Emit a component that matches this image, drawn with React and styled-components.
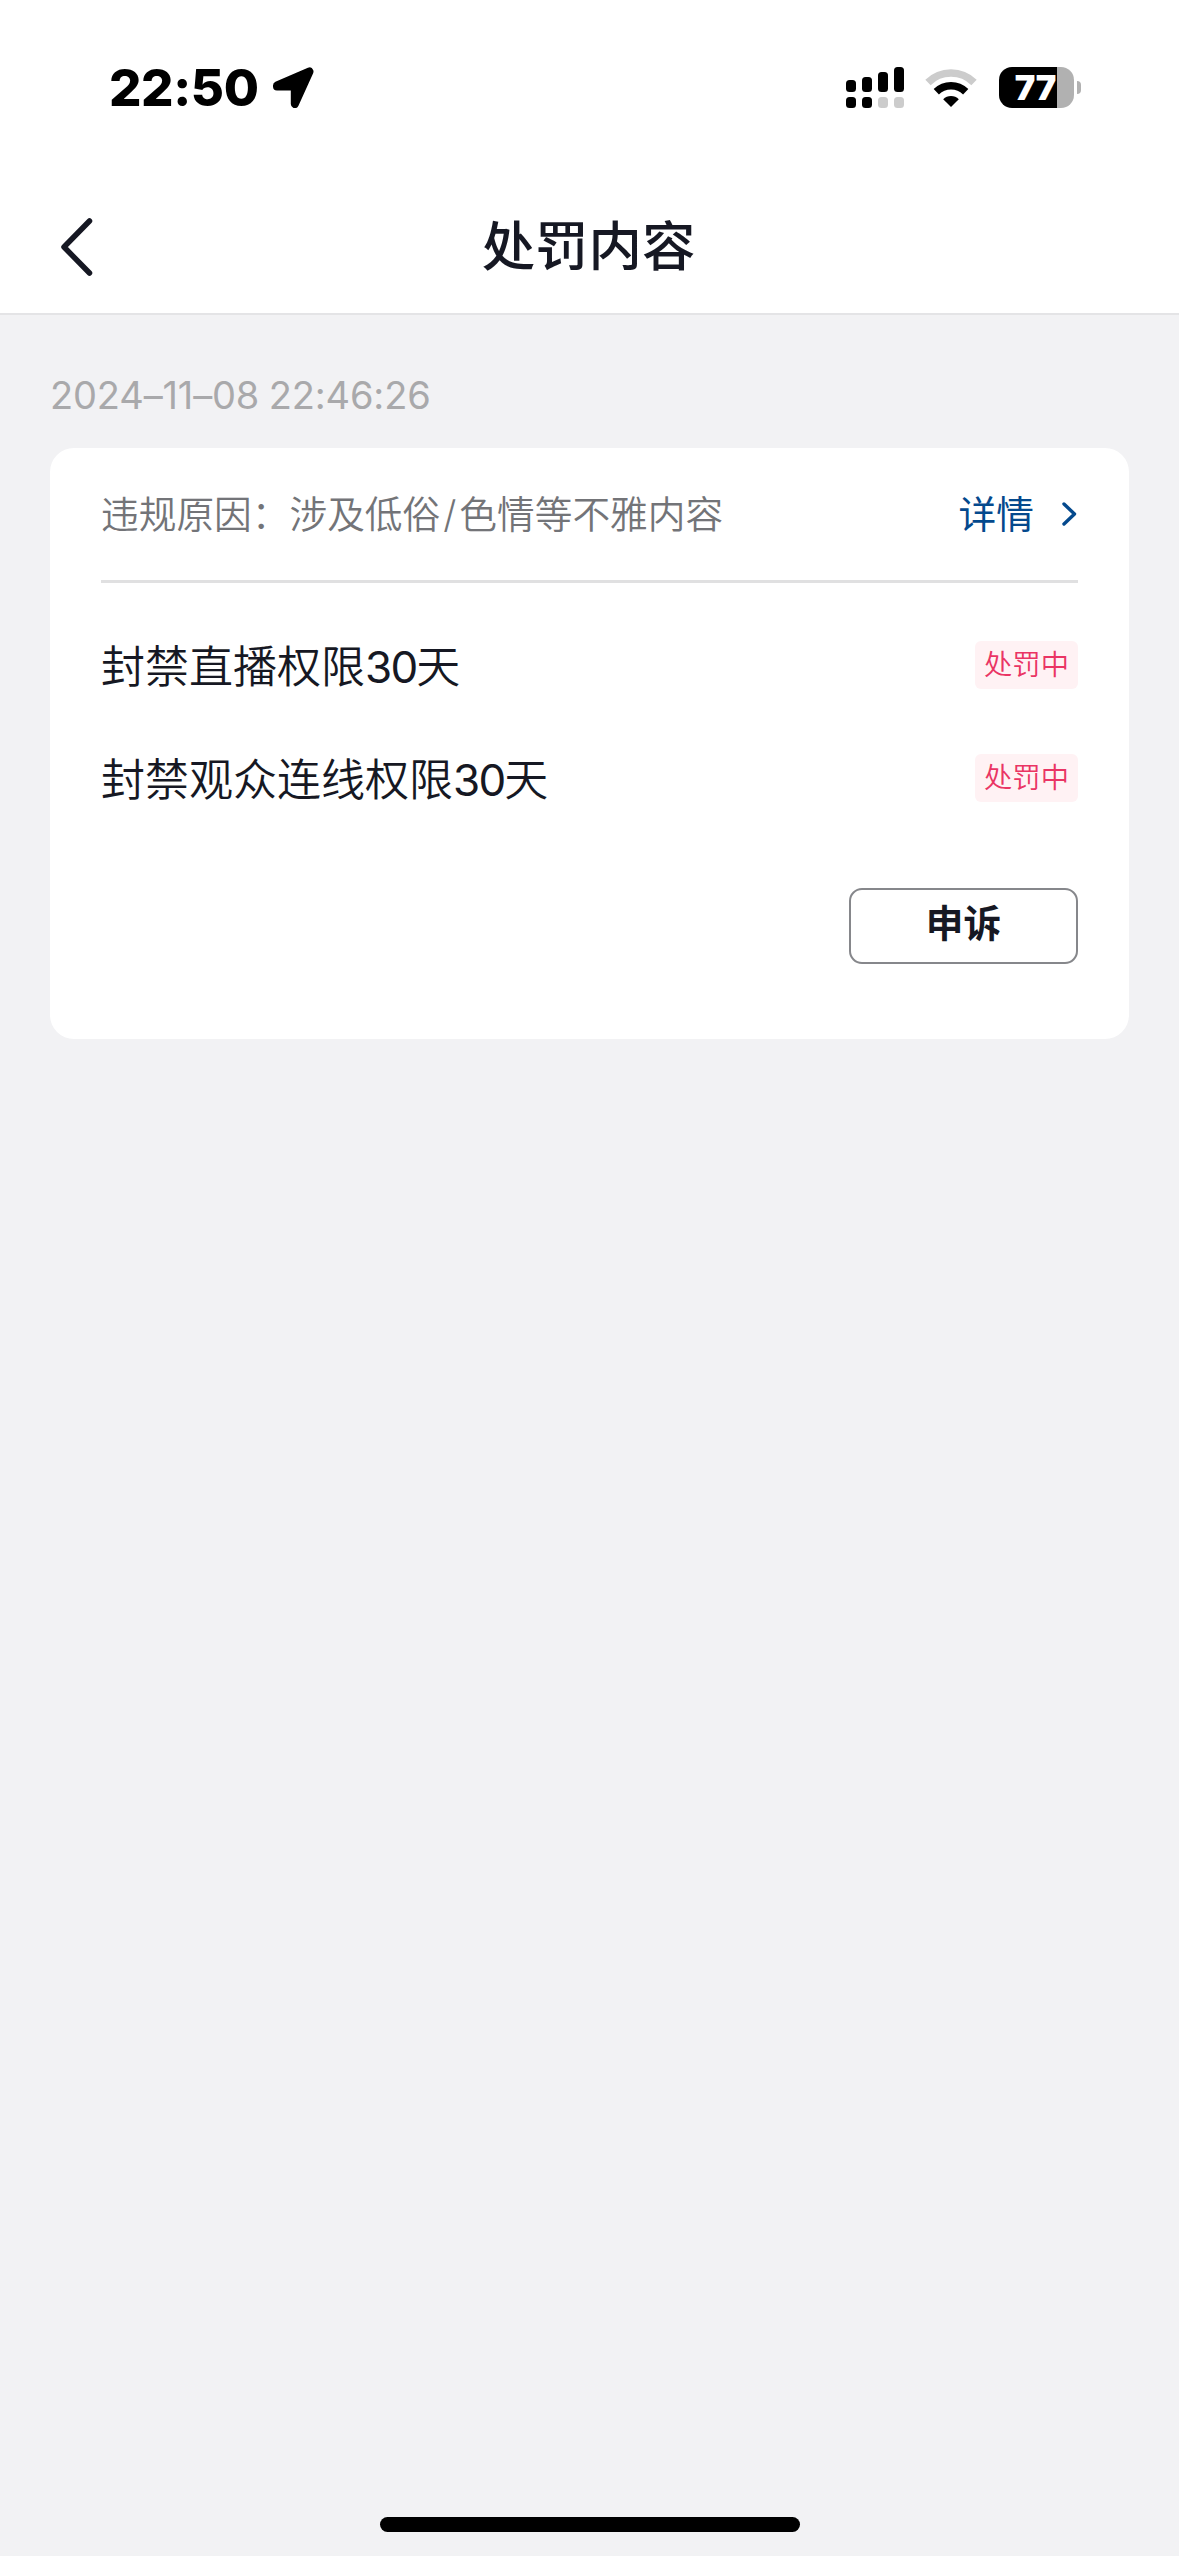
import React from 'react';
import styled, { createGlobalStyle } from 'styled-components';

const GlobalStyle = createGlobalStyle`
  * {
    box-sizing: border-box;
  }
  body {
    margin: 0;
    background: #f2f2f4;
    font-family: Inter, 'Noto Sans CJK SC', sans-serif;
    color: #161823;
  }
`;

const Screen = styled.div`
  display: flex;
  flex-direction: column;
  width: 1179px;
  height: 2556px;
  background: #f2f2f4;
`;

const StatusBar = styled.div`
  display: flex;
  align-items: center;
  justify-content: space-between;
  height: 177px;
  padding: 0 98px 2px 109px;
  background: #fff;
`;

const StatusGroup = styled.div`
  display: flex;
  align-items: center;
`;

const Clock = styled.span`
  width: 164px;
  font-size: 51px;
  font-weight: 800;
  line-height: 60px;
  letter-spacing: -0.4px;
  color: #000;
`;

const NavBar = styled.div`
  display: grid;
  grid-template-columns: 160px 1fr 162px;
  align-items: center;
  height: 138px;
  padding-top: 3px;
  border-bottom: 2px solid #e4e4e6;
  background: #fff;
`;

const BackButton = styled.button`
  display: flex;
  padding: 0 0 0 58px;
  border: 0;
  background: none;
`;

const Title = styled.h1`
  margin: 0;
  font-size: 53.4px;
  font-weight: 500;
  line-height: 74px;
  text-align: center;
`;

const Content = styled.div`
  flex: 1;
  padding: 57px 50px 0;
`;

const Time = styled.div`
  height: 76px;
  font-size: 38px;
  font-weight: 400;
  line-height: 46px;
  letter-spacing: -0.15px;
  word-spacing: -1px;
  color: #a9a9ab;
`;

const Card = styled.div`
  height: 591px;
  padding: 0 51px;
  border-radius: 24px;
  background: #fff;
`;

const Reason = styled.div`
  display: flex;
  align-items: center;
  justify-content: space-between;
  height: 135px;
  border-bottom: 3px solid #e0e0e1;
  font-size: 37.7px;
  font-weight: 350;
  line-height: 54px;
`;

const ReasonText = styled.span`
  color: #737478;
`;

const Slash = styled.span`
  padding: 0 3px;
`;

const DetailLink = styled.a`
  display: flex;
  align-items: center;
  gap: 27px;
  font-weight: 400;
  color: #04498d;
`;

const List = styled.div`
  display: flex;
  flex-direction: column;
  gap: 49px;
  padding-top: 50px;
`;

const Item = styled.div`
  display: flex;
  align-items: center;
  justify-content: space-between;
  height: 64px;
`;

const Label = styled.span`
  padding-top: 4px;
  font-size: 44px;
  font-weight: 350;
  line-height: 64px;
`;

const Days = styled.span`
  font-weight: 400;
  letter-spacing: -1.8px;
`;

const Tag = styled.span`
  width: 103px;
  height: 48px;
  border-radius: 6px;
  background: #fff2f4;
  font-size: 28.3px;
  font-weight: 350;
  line-height: 48px;
  text-align: center;
  color: #ea3564;
`;

const Actions = styled.div`
  display: flex;
  justify-content: flex-end;
  padding-top: 78px;
`;

const AppealButton = styled.button`
  width: 229px;
  height: 76px;
  padding: 0 0 7px;
  border: 2px solid #86878b;
  border-radius: 13px;
  background: #fff;
  font-family: inherit;
  font-size: 37.7px;
  font-weight: 700;
  line-height: 54px;
  color: #161823;
`;

const HomeIndicator = styled.div`
  width: 420px;
  height: 15px;
  margin: 0 auto 24px;
  border-radius: 8px;
  background: #000;
`;

const punishments = [
  { scope: '封禁直播权限', days: 30, status: '处罚中' },
  { scope: '封禁观众连线权限', days: 30, status: '处罚中' },
];

const bars = [
  { x: 0, y: 13 },
  { x: 16, y: 10 },
  { x: 32, y: 5 },
  { x: 48, y: 0 },
];

const LocationIcon = () => (
  <svg width="41" height="41" viewBox="0 0 41 41">
    <path
      d="M4 18.5 36.5 4.5 21.8 37V19.5H4Z"
      stroke="#000"
      strokeWidth="8"
      strokeLinejoin="round"
    />
  </svg>
);

const SignalIcon = () => (
  <svg width="58" height="41" viewBox="0 0 58 41">
    {bars.map(({ x, y }, i) => (
      <g key={x}>
        <rect x={x} y={y} width="10" height={25 - y} rx="3.5" />
        <rect x={x} y="30" width="10" height="11" rx="3.5" fill={i > 1 ? '#ccc' : '#000'} />
      </g>
    ))}
  </svg>
);

const WifiIcon = () => (
  <svg width="52" height="38" viewBox="0 0 52 38" fill="none">
    <path d="M3 13.5A32.5 32.5 0 0 1 49 13.5" stroke="#ccc" strokeWidth="7.5" />
    <path d="M11.3 22.7A21 21 0 0 1 40.7 22.7" stroke="#000" strokeWidth="7.5" />
    <path d="M26 38 18.2 30.3A11 11 0 0 1 33.8 30.3Z" fill="#000" />
  </svg>
);

const Battery = styled.div`
  display: flex;
  align-items: center;
  gap: 3px;
  margin-left: 22px;
`;

const BatteryBody = styled.div`
  width: 75px;
  height: 41px;
  padding-right: 2px;
  border-radius: 13px;
  background: linear-gradient(to right, #000 58px, #b1b1b1 58px);
  font-size: 34.5px;
  font-weight: 900;
  line-height: 41px;
  text-align: center;
  color: #fff;
`;

const BatteryCap = styled.div`
  width: 4px;
  height: 13px;
  border-radius: 0 5px 5px 0;
  background: #b1b1b1;
`;

const Gap = styled.span`
  width: 21px;
`;

export default () => (
  <Screen>
    <GlobalStyle />
    <StatusBar>
      <StatusGroup>
        <Clock>22:50</Clock>
        <LocationIcon />
      </StatusGroup>
      <StatusGroup>
        <SignalIcon />
        <Gap />
        <WifiIcon />
        <Battery>
          <BatteryBody>77</BatteryBody>
          <BatteryCap />
        </Battery>
      </StatusGroup>
    </StatusBar>
    <NavBar>
      <BackButton>
        <svg width="38" height="60" viewBox="0 0 38 60" fill="none">
          <path d="M31.5 4 6 30 31.5 56" stroke="#161823" strokeWidth="5.5" strokeLinecap="round" strokeLinejoin="round" />
        </svg>
      </BackButton>
      <Title>处罚内容</Title>
    </NavBar>
    <Content>
      <Time>2024–11–08 22:46:26</Time>
      <Card>
        <Reason>
          <ReasonText>
            违规原因：涉及低俗<Slash>/</Slash>色情等不雅内容
          </ReasonText>
          <DetailLink>
            详情
            <svg width="17" height="26" viewBox="0 0 17 26" fill="none">
              <path d="M3 3 13.5 13 3 23" stroke="#04498d" strokeWidth="3.4" strokeLinecap="round" strokeLinejoin="round" />
            </svg>
          </DetailLink>
        </Reason>
        <List>
          {punishments.map(({ scope, days, status }) => (
            <Item key={scope}>
              <Label>
                {scope}
                <Days>{days}</Days>天
              </Label>
              <Tag>{status}</Tag>
            </Item>
          ))}
        </List>
        <Actions>
          <AppealButton>申诉</AppealButton>
        </Actions>
      </Card>
    </Content>
    <HomeIndicator />
  </Screen>
);
